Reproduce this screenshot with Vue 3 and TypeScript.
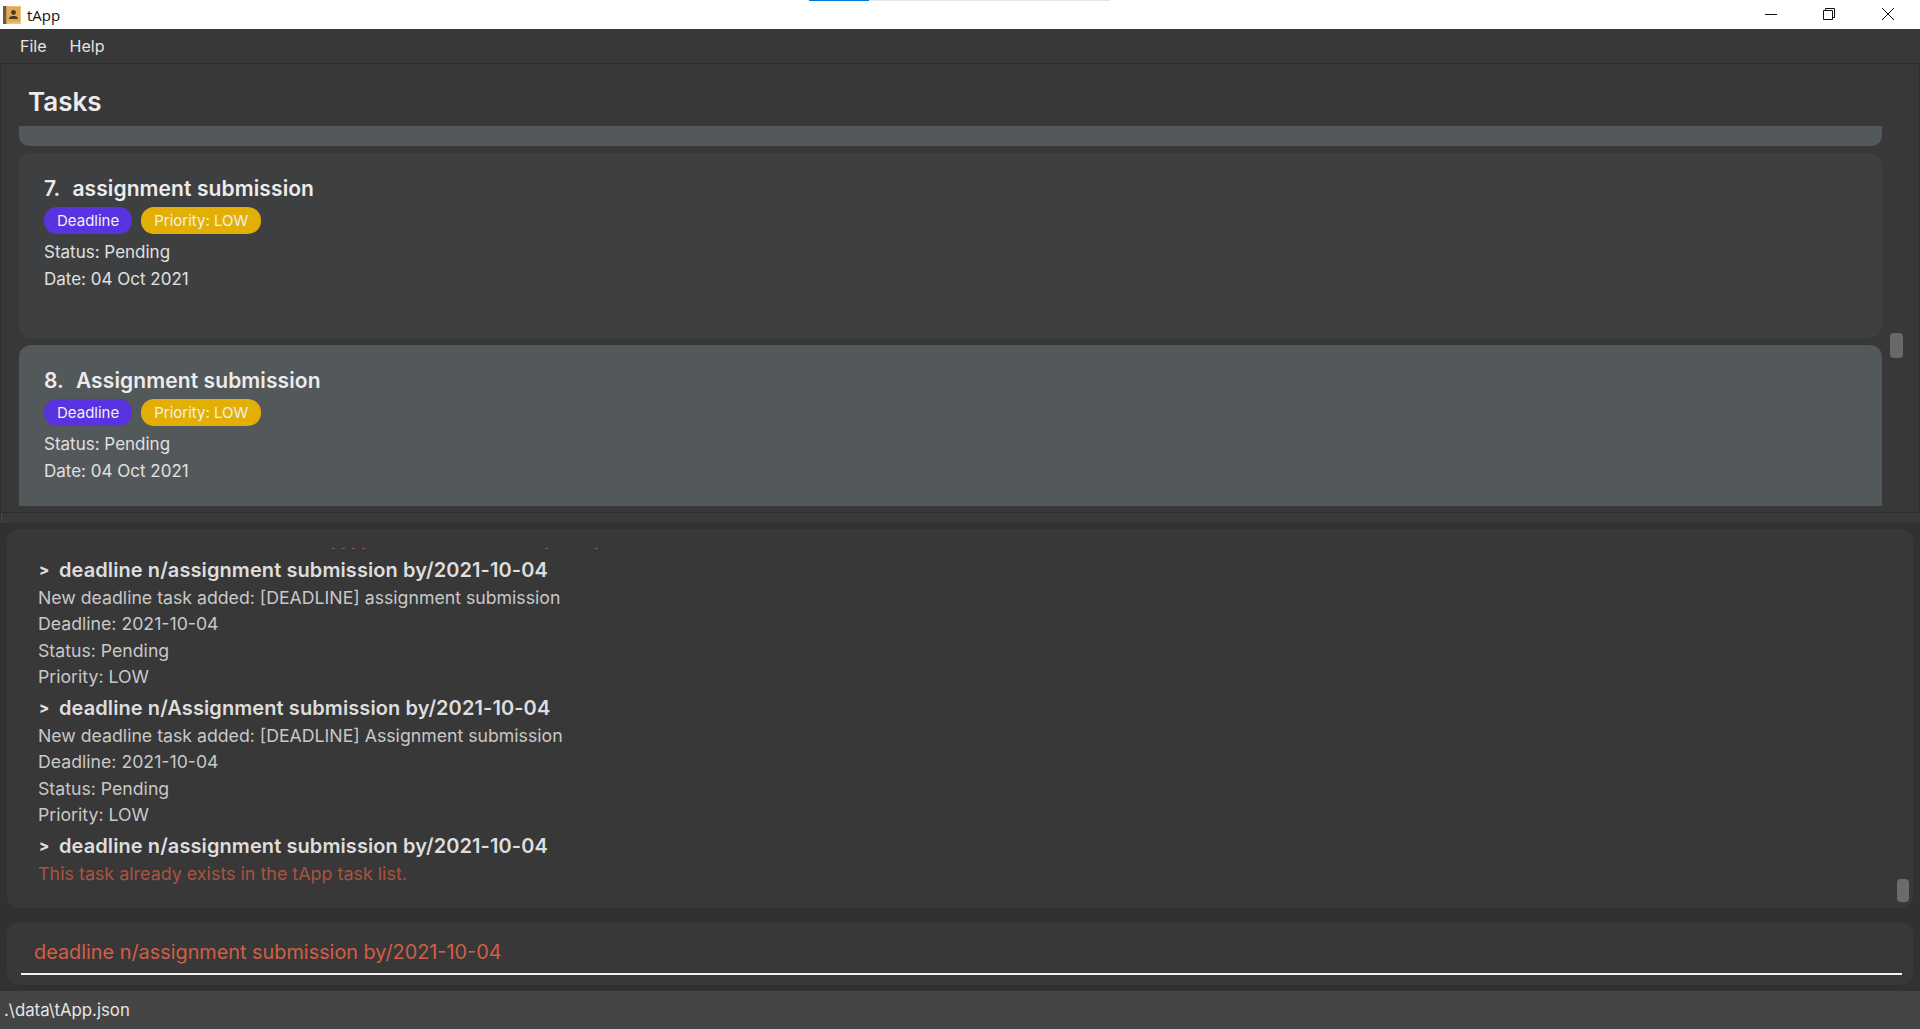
<script setup lang="ts">
interface Task { no: number; name: string; selected: boolean }
const tasks: Task[] = [
  { no: 7, name: 'assignment submission', selected: false },
  { no: 8, name: 'Assignment submission', selected: true },
]
interface Entry { cmd: string; lines: string[]; error?: boolean }
const entries: Entry[] = [
  { cmd: 'deadline n/assignment submission by/2021-10-04', lines: ['New deadline task added: [DEADLINE] assignment submission', 'Deadline: 2021-10-04', 'Status: Pending', 'Priority: LOW'] },
  { cmd: 'deadline n/Assignment submission by/2021-10-04', lines: ['New deadline task added: [DEADLINE] Assignment submission', 'Deadline: 2021-10-04', 'Status: Pending', 'Priority: LOW'] },
  { cmd: 'deadline n/assignment submission by/2021-10-04', lines: ['This task already exists in the tApp task list.'], error: true },
]
// Descender tips of the scrolled-off line above the visible log
const tips: number[] = [325, 335, 345, 355, 538, 588]
</script>

<template>
  <div class="window">
    <header class="titlebar">
      <svg class="appicon" viewBox="0 0 18 18" width="18" height="18" aria-hidden="true">
        <rect x="0" y="0" width="18" height="18" fill="#f0c470" />
        <rect x="0" y="0" width="3.5" height="18" fill="#6e5a44" />
        <rect x="3.5" y="1" width="13.5" height="15" fill="#e2a853" />
        <circle cx="10.5" cy="6.5" r="2.4" fill="#4c3a22" />
        <path d="M6 13 C6 10.5 8.5 10 10.5 10 C12.5 10 15 10.5 15 13 Z" fill="#4c3a22" />
      </svg>
      <span class="apptitle">tApp</span>
      <div class="progress"><span class="progress-on"></span></div>
      <div class="winbtns">
        <svg viewBox="0 0 14 14" width="14" height="14" aria-hidden="true"><path d="M1 7.5H13" stroke="#111" fill="none" /></svg>
        <svg class="restore" viewBox="0 0 14 14" width="14" height="14" aria-hidden="true"><path d="M1.5 3.5H10.5V12.5H1.5Z M3.5 3.5V1.5H12.5V10.5H10.5" stroke="#111" fill="none" /></svg>
        <svg viewBox="0 0 14 14" width="14" height="14" aria-hidden="true"><path d="M1 1L13 13M13 1L1 13" stroke="#111" fill="none" /></svg>
      </div>
    </header>

    <nav class="menubar">
      <span class="menuitem">File</span>
      <span class="menuitem">Help</span>
    </nav>

    <section class="taskpanel">
      <h1 class="heading">Tasks</h1>
      <div class="listrow">
        <div class="list">
          <div class="sliver"></div>
          <article v-for="t in tasks" :key="t.no" class="card" :class="{ selected: t.selected }">
            <div class="cardtitle"><span class="no">{{ t.no }}.</span>{{ t.name }}</div>
            <div class="chips">
              <span class="chip purple">Deadline</span>
              <span class="chip amber">Priority: LOW</span>
            </div>
            <div class="meta">Status: Pending</div>
            <div class="meta">Date: 04 Oct 2021</div>
          </article>
        </div>
        <div class="track"><span class="thumb"></span></div>
      </div>
    </section>

    <div class="divider"></div>

    <section class="results">
      <span v-for="x in tips" :key="x" class="tip" :style="{ left: x + 'px' }"></span>
      <div class="log">
        <div class="clipped"></div>
        <div v-for="(e, i) in entries" :key="i" class="entry">
          <div class="cmd"><span class="chev">&gt;</span><span>{{ e.cmd }}</span></div>
          <div v-for="l in e.lines" :key="l" class="out" :class="{ err: e.error }">{{ l }}</div>
        </div>
      </div>
      <span class="thumb2"></span>
    </section>

    <section class="command">
      <div class="cmdinput">deadline n/assignment submission by/2021-10-04</div>
    </section>

    <footer class="status">.\data\tApp.json</footer>
  </div>
</template>

<style>
html, body { margin: 0; background: #383838; overflow: hidden; }
</style>

<style scoped>
.window {
  width: 1920px;
  height: 1029px;
  display: flex;
  flex-direction: column;
  background: #313131;
  font-family: Inter, "Liberation Sans", sans-serif;
  color: #e6e6e6;
  overflow: hidden;
}
.titlebar {
  height: 29px;
  flex: none;
  background: #fff;
  display: flex;
  align-items: center;
  padding-left: 3px;
  position: relative;
}
.appicon { margin-right: 6px; }
.apptitle {
  font: 15px "Open Sans", sans-serif;
  color: #111;
}
.progress {
  position: absolute;
  left: 809px;
  top: 0;
  width: 301px;
  height: 1px;
  background: #e6e6e6;
}
.progress-on {
  display: block;
  width: 60px;
  height: 1px;
  background: #0078d7;
}
.winbtns {
  margin-left: auto;
  display: flex;
  gap: 44px;
  padding-right: 25px;
  padding-bottom: 2px;
}
.restore { margin-right: 1px; }
.menubar {
  height: 34px;
  flex: none;
  background: #383838;
  display: flex;
  align-items: center;
  gap: 23px;
  padding-left: 20px;
  font-size: 16px;
  color: #e4e4e4;
  border-bottom: 1px solid #2d2d2d;
}
.taskpanel {
  height: 449px;
  flex: none;
  background: #383838;
  border: 1px solid #2d2d2d;
  border-top: 0;
  box-sizing: border-box;
  display: flex;
  flex-direction: column;
}
.heading {
  margin: 0;
  height: 62px;
  flex: none;
  padding-left: 27px;
  line-height: 75px;
  font-size: 26px;
  font-weight: 600;
  color: #ececec;
}
.listrow {
  flex: 1;
  min-height: 0;
  display: flex;
}
.list {
  flex: none;
  width: 1863px;
  margin-left: 18px;
  height: 380px;
  overflow: hidden;
  display: flex;
  flex-direction: column;
  gap: 7px;
}
.sliver {
  height: 20px;
  flex: none;
  background: #53585b;
  border-radius: 0 0 10px 10px;
}
.card {
  flex: none;
  height: 185px;
  box-sizing: border-box;
  padding: 22px 25px 0;
  background: #3e3f41;
  border-radius: 12px;
}
.card.selected { background: #53585b; }
.cardtitle {
  font-size: 21px;
  font-weight: 600;
  line-height: 28px;
  letter-spacing: 0.1px;
  color: #ececec;
}
.no { margin-right: 12px; }
.chips {
  display: flex;
  gap: 9px;
  margin-top: 4px;
}
.chip {
  height: 27px;
  line-height: 27px;
  padding: 0 13px;
  border-radius: 13px;
  font-size: 15px;
  color: #efefef;
}
.purple { background: #5a33e0; }
.amber { background: #e3af05; }
.meta {
  font-size: 17px;
  line-height: 27px;
  color: #e0e0e0;
}
.chips + .meta { margin-top: 5px; }
.track {
  flex: 1;
  position: relative;
}
.thumb {
  position: absolute;
  left: 8px;
  top: 207px;
  width: 13px;
  height: 25px;
  border-radius: 4px;
  background: #686868;
}
.divider {
  height: 10px;
  flex: none;
  background: linear-gradient(90deg, #333 0 1px, #4a4a4a 1px 2px, #393939 2px);
  border-bottom: 6px solid #313131;
}
.results {
  position: relative;
  height: 379px;
  flex: none;
  box-sizing: border-box;
  margin: 0 7px;
  background: #383838;
  border-radius: 12px;
  overflow: hidden;
}
.tip {
  position: absolute;
  top: 19px;
  width: 3px;
  height: 1px;
  background: #8a5a4e;
}
.log {
  padding: 0 0 0 31px;
}
.clipped { height: 23px; }
.cmd {
  display: flex;
  align-items: center;
  height: 29px;
  margin-top: 4px;
  font-size: 20px;
  font-weight: 600;
  line-height: 29px;
  letter-spacing: 0.09px;
  color: #dedede;
}
.chev {
  flex: none;
  width: 21px;
  padding-left: 1px;
  margin-top: -2px;
  box-sizing: border-box;
  font-size: 15px;
  font-weight: 800;
  line-height: 1;
  letter-spacing: 0;
}
.out {
  font-size: 17.7px;
  line-height: 26.3px;
  color: #c8c8c8;
}
.out.err { color: #a85443; font-size: 17.9px; }
.thumb2 {
  position: absolute;
  right: 4px;
  top: 350px;
  width: 12px;
  height: 23px;
  border-radius: 4px;
  background: #6b6b6b;
}
.command {
  height: 63px;
  flex: none;
  box-sizing: border-box;
  margin: 14px 7px 6px;
  padding: 0 11px 0 14px;
  background: #383838;
  border-radius: 12px;
}
.cmdinput {
  height: 53px;
  box-sizing: border-box;
  padding: 17px 0 0 13px;
  border-bottom: 2px solid #f2f2f2;
  font-size: 19.85px;
  line-height: 26px;
  color: #d25f45;
}
.status {
  height: 38px;
  flex: none;
  background: #454545;
  padding-left: 4px;
  line-height: 38px;
  font-size: 16.8px;
  color: #e6e6e6;
}
</style>
